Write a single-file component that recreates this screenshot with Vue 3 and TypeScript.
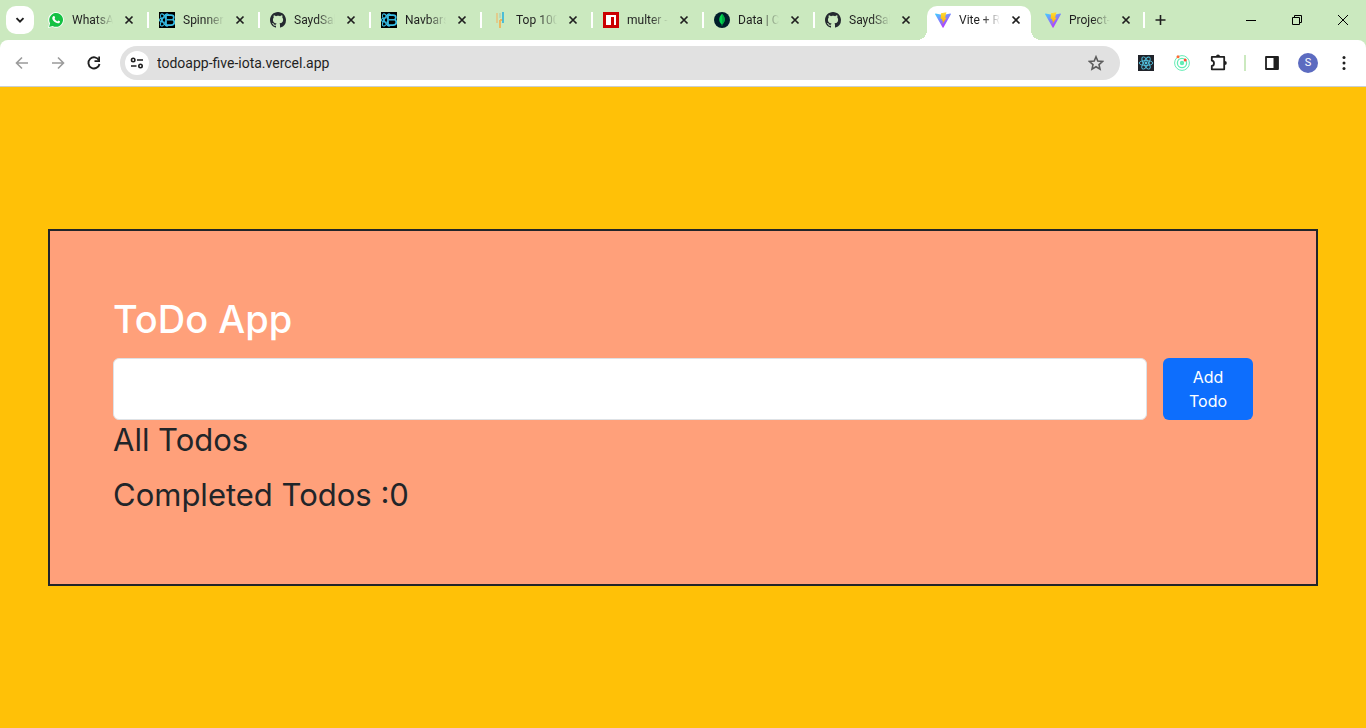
<script setup lang="ts">
import { ref } from 'vue'

type IconName = 'whatsapp' | 'bootstrap' | 'github' | 'bars' | 'npm' | 'mongo' | 'vite'

interface Tab {
  title: string
  icon: IconName
  active?: boolean
}

const tabs: Tab[] = [
  { title: 'WhatsA', icon: 'whatsapp' },
  { title: 'Spinner', icon: 'bootstrap' },
  { title: 'SaydSal', icon: 'github' },
  { title: 'Navbars', icon: 'bootstrap' },
  { title: 'Top 100', icon: 'bars' },
  { title: 'multer -', icon: 'npm' },
  { title: 'Data | C', icon: 'mongo' },
  { title: 'SaydSal', icon: 'github' },
  { title: 'Vite + R', icon: 'vite', active: true },
  { title: 'Project-', icon: 'vite' },
]

const url = ref('todoapp-five-iota.vercel.app')
const draft = ref('')
const completed = ref(0)
</script>

<template>
  <div class="window">
    <header class="tab-strip">
      <button class="tab-search" type="button" aria-label="Search tabs">
        <svg width="10" height="10" viewBox="0 0 10 10"><path d="M1.5 3.2 5 6.7 8.5 3.2" fill="none" stroke="#1f1f1f" stroke-width="1.9" /></svg>
      </button>

      <nav class="tabs" aria-label="Open tabs">
        <div v-for="(tab, i) in tabs" :key="i" class="tab" :class="{ active: tab.active, 'no-line': tabs[i + 1]?.active }">
          <svg v-if="tab.icon === 'whatsapp'" class="favicon" viewBox="0 0 16 16">
            <path d="M0 16 1.200 11.700A7.800 7.800 0 1 1 4.400 14.800Z" fill="#fff" />
            <path d="M1.100 14.900 2.100 11.300A6.900 6.900 0 1 1 4.700 13.900Z" fill="#14c143" />
            <path d="M5.500 4.100c.4-.3.8-.2 1 .2l.6 1.400c.1.300-.5.900-.6 1.100.7 1.300 1.500 2 2.800 2.600.300-.1.800-1 1.100-.9l1.500.8c.3.200.1 1-.3 1.400-1 1-2.500.7-4-.1-1.800-1-3-2.700-3.300-3.900-.2-1.100.5-2.100 1.200-2.600Z" fill="#fff" />
          </svg>
          <svg v-else-if="tab.icon === 'bootstrap'" class="favicon" viewBox="0 0 16 16">
            <path d="M0 0h16v16H0Z" fill="#000" />
            <g fill="none" stroke="#38bfe8" stroke-width="1.100">
              <ellipse cx="5.500" cy="8" rx="5" ry="2.200" />
              <ellipse cx="5.500" cy="8" rx="6.800" ry="2.300" transform="rotate(60 5.500 8)" />
              <ellipse cx="5.500" cy="8" rx="6.800" ry="2.300" transform="rotate(-60 5.500 8)" />
            </g>
            <path d="M7 3.200h5c2 0 2.800 1 2.800 2.300 0 1.200-.6 1.900-1.500 2.200 1.200.2 2 1.100 2 2.500 0 1.800-1.200 2.900-3.200 2.900H7Z" fill="#000" stroke="#38bfe8" stroke-width="1.700" />
            <path d="M8 7.800h5" stroke="#38bfe8" stroke-width="1.400" />
          </svg>
          <svg v-else-if="tab.icon === 'github'" class="favicon" viewBox="0 0 16 16">
            <path fill="#24292f" d="M8 0C3.580 0 0 3.580 0 8c0 3.540 2.290 6.530 5.470 7.590.4.070.55-.17.55-.38 0-.19-.01-.82-.01-1.490-2.010.37-2.530-.49-2.690-.94-.09-.23-.48-.94-.82-1.130-.28-.15-.68-.52-.01-.53.63-.01 1.080.58 1.230.82.72 1.210 1.870.87 2.330.66.07-.52.28-.87.51-1.070-1.780-.2-3.640-.89-3.640-3.950 0-.87.31-1.590.82-2.150-.08-.2-.36-1.020.08-2.120 0 0 .67-.21 2.200.82.64-.18 1.320-.27 2-.27s1.360.09 2 .27c1.530-1.040 2.200-.82 2.200-.82.44 1.100.16 1.920.08 2.120.51.56.82 1.270.82 2.150 0 3.070-1.870 3.750-3.650 3.950.29.25.54.73.54 1.480 0 1.070-.01 1.930-.01 2.200 0 .21.15.46.55.38A8.010 8.010 0 0 0 16 8c0-4.420-3.580-8-8-8Z" />
          </svg>
          <svg v-else-if="tab.icon === 'bars'" class="favicon" viewBox="0 0 16 16">
            <path d="M5 1v10" stroke="#e8c27c" stroke-width="1.500" />
            <path d="M8 8v8M8 8h3" stroke="#f0b458" stroke-width="1.800" />
            <path d="M11 0v11" stroke="#3fb9d8" stroke-width="1.800" />
            <path d="M8 1v5" stroke="#a8c7b0" />
          </svg>
          <svg v-else-if="tab.icon === 'npm'" class="favicon" viewBox="0 0 16 16">
            <path d="M0 0h16v16H0Z" fill="#cb0000" />
            <path d="M3 3h10v10h-2V5H8v8H3Z" fill="#fff" />
          </svg>
          <svg v-else-if="tab.icon === 'mongo'" class="favicon" viewBox="0 0 16 16">
            <circle cx="8" cy="8" r="8" fill="#001e2b" />
            <path d="M8 1.800c3.600 3.700 3.600 7.600.3 10.700l-.1 1.600h-.4l-.1-1.600C4.400 9.400 4.400 5.500 8 1.800Z" fill="#00d64f" />
            <path d="M8 1.800c3.600 3.700 3.600 7.600.3 10.700Z" fill="#00a844" />
          </svg>
          <svg v-else class="favicon" viewBox="0 0 16 16">
            <defs>
              <linearGradient :id="'shell' + i" x1="0" y1="0" x2=".6" y2="1">
                <stop offset="0" stop-color="#41d1ff" />
                <stop offset="1" stop-color="#bd34fe" />
              </linearGradient>
              <linearGradient :id="'bolt' + i" x1="0" y1="0" x2="0" y2="1">
                <stop offset="0" stop-color="#ffdd35" />
                <stop offset="1" stop-color="#ffa800" />
              </linearGradient>
            </defs>
            <path d="M15.900 2.300 8.500 15.500a.5.500 0 0 1-.9 0L.1 2.300a.5.500 0 0 1 .5-.7L8 2.900l7.400-1.300a.5.500 0 0 1 .5.700Z" :fill="`url(#shell${i})`" />
            <path d="M11.400.200 6 1.200 5.600 7l1.600-.3-.4 2.300 1.300-.4-.7 3.300L11.800 5.600l-1.700.3Z" :fill="`url(#bolt${i})`" />
          </svg>
          <span class="title">{{ tab.title }}</span>
          <button class="close" type="button" :aria-label="'Close ' + tab.title">
            <svg width="10" height="10" viewBox="0 0 10 10"><path d="m1.500 1.500 7 7M8.500 1.500l-7 7" stroke="#1f1f1f" stroke-width="1.700" /></svg>
          </button>
        </div>
      </nav>

      <button class="new-tab" type="button" aria-label="New tab">
        <svg width="12" height="12" viewBox="0 0 12 12"><path d="M5.500 1v10M.5 6h10" stroke="#1f1f1f" stroke-width="1.600" /></svg>
      </button>

      <div class="window-controls">
        <button type="button" aria-label="Minimize">
          <svg width="10" height="10" viewBox="0 0 10 10"><path d="M0 5.500h10" stroke="#000" /></svg>
        </button>
        <button type="button" aria-label="Restore">
          <svg width="10" height="10" viewBox="0 0 10 10" fill="none" stroke="#000"><path d="M.5 2.500h7v7h-7ZM2.500 2.500v-2h7v7h-2" /></svg>
        </button>
        <button type="button" aria-label="Close window">
          <svg width="10" height="10" viewBox="0 0 10 10"><path d="m0 0 10 10M10 0 0 10" stroke="#000" /></svg>
        </button>
      </div>
    </header>

    <div class="toolbar">
      <button class="tool" type="button" aria-label="Back">
        <svg width="16" height="16" viewBox="0 0 16 16" fill="none" stroke="#9b9b9b" stroke-width="1.600"><path d="M14 8H3M8 2.500 2.500 8 8 13.500" /></svg>
      </button>
      <button class="tool" type="button" aria-label="Forward">
        <svg width="16" height="16" viewBox="0 0 16 16" fill="none" stroke="#9b9b9b" stroke-width="1.600"><path d="M2 8h11M8 2.500 13.500 8 8 13.500" /></svg>
      </button>
      <button class="tool" type="button" aria-label="Reload">
        <svg width="16" height="16" viewBox="0 0 16 16"><path d="M13 5.300A5.600 5.600 0 1 0 13.500 9" fill="none" stroke="#1f1f1f" stroke-width="1.900" /><path d="M14 1.500V7H8.500V5.300h3.800V1.500Z" fill="#1f1f1f" /></svg>
      </button>

      <div class="address">
        <button class="site-info" type="button" aria-label="View site information">
          <svg width="14" height="12" viewBox="0 0 14 12" fill="none" stroke="#1f1f1f" stroke-width="1.600"><circle cx="3.200" cy="3" r="1.700" /><path d="M7 3h6M1 9h5.500" /><circle cx="10.500" cy="9" r="1.700" /></svg>
        </button>
        <input v-model="url" class="url" type="text" aria-label="Address" spellcheck="false" />
        <button class="tool" type="button" aria-label="Bookmark this tab">
          <svg width="16" height="16" viewBox="0 0 16 16"><path d="m8 1.800 1.800 4.300 4.700.4-3.500 3.100 1 4.600L8 11.800l-4 2.400 1-4.600-3.500-3.100 4.700-.4Z" fill="none" stroke="#5c5c5c" stroke-width="1.600" /></svg>
        </button>
      </div>

      <div class="extensions">
        <button class="tool" type="button" aria-label="React Developer Tools">
          <svg width="16" height="16" viewBox="0 0 16 16">
            <path d="M0 0h16v16H0Z" fill="#20232a" />
            <g fill="none" stroke="#53c1de" stroke-width=".9">
              <ellipse cx="8" cy="8" rx="6.800" ry="2.500" />
              <ellipse cx="8" cy="8" rx="6.800" ry="2.500" transform="rotate(60 8 8)" />
              <ellipse cx="8" cy="8" rx="6.800" ry="2.500" transform="rotate(120 8 8)" />
            </g>
            <circle cx="8" cy="8" r="1.400" fill="#53c1de" />
          </svg>
        </button>
        <button class="tool" type="button" aria-label="Orbit">
          <svg width="16" height="16" viewBox="0 0 16 16">
            <g fill="none" stroke="#63ecb4"><circle cx="8" cy="8" r="7.400" /><circle cx="8" cy="8" r="4.600" stroke-width="1.300" /></g>
            <circle cx="8" cy="8" r="2.200" fill="#63ecb4" />
            <circle cx="4" cy="1.700" r="1.500" fill="#ff6b35" /><circle cx="11.200" cy="5" r="1.500" fill="#ff4b2b" />
          </svg>
        </button>
        <button class="tool" type="button" aria-label="Extensions">
          <svg width="18" height="18" viewBox="0 0 18 18"><path d="M2.800 2.900h12.400v12.400H2.800v-3.500c2.900 0 2.900-5.200 0-5.200Z" fill="none" stroke="#1f1f1f" stroke-width="1.800" stroke-linejoin="round" /><path d="M7 2.500a2 2 0 0 1 4 0ZM15.800 7a2 2 0 0 1 0 4Z" fill="#1f1f1f" /></svg>
        </button>
        <span class="divider"></span>
        <button class="tool" type="button" aria-label="Side panel">
          <svg width="14" height="14" viewBox="0 0 14 14"><path d="M1 1h12v12H1Z" fill="none" stroke="#1f1f1f" stroke-width="1.800" stroke-linejoin="round" /><path d="M8.500 1H13v12H8.500Z" fill="#1f1f1f" /></svg>
        </button>
        <button class="tool" type="button" aria-label="Profile"><span class="avatar">S</span></button>
        <button class="tool" type="button" aria-label="Menu">
          <svg width="4" height="14" viewBox="0 0 4 14" fill="#1f1f1f"><circle cx="2" cy="1.600" r="1.500" /><circle cx="2" cy="7" r="1.500" /><circle cx="2" cy="12.400" r="1.500" /></svg>
        </button>
      </div>
    </div>

    <main class="page">
      <section class="card">
        <h1>ToDo App</h1>
        <form class="entry" @submit.prevent>
          <input v-model="draft" class="entry-input" type="text" aria-label="New todo" />
          <button class="add" type="submit">Add Todo</button>
        </form>
        <h2>All Todos</h2>
        <h2>Completed Todos :{{ completed }}</h2>
      </section>
    </main>
  </div>
</template>

<style>
body {
  margin: 0;
}
</style>

<style scoped>
.window {
  display: flex;
  flex-direction: column;
  min-height: 100vh;
  background: #cbe9bf;
  font-family: "Open Sans", "Noto Sans", sans-serif;
  color: #1f1f1f;
}

.window * {
  box-sizing: border-box;
}

button {
  display: flex;
  align-items: center;
  justify-content: center;
  padding: 0;
  border: 0;
  background: none;
  color: inherit;
  font: inherit;
}

.tab-strip {
  display: flex;
  height: 40px;
  padding-left: 6px;
}

.tab-search {
  width: 28px;
  height: 28px;
  margin: 6px 4px 0 0;
  border-radius: 10px;
  background: #fff;
}

.tabs {
  display: flex;
}

.tab {
  position: relative;
  display: flex;
  align-items: center;
  width: 111px;
  padding-left: 10px;
}

.tab::after {
  content: "";
  width: 2px;
  height: 16px;
  margin-left: auto;
  background: #fff;
}

.tab.no-line::after {
  background: none;
}

.tab.active {
  width: 104px;
  height: 34px;
  margin: 6px 4px 0 1px;
  padding: 0 0 6px 8px;
  border-radius: 10px 10px 0 0;
  background: #fff;
}

.tab.active::before,
.tab.active::after {
  content: "";
  position: absolute;
  bottom: 0;
  width: 10px;
  height: 10px;
}

.tab.active::before {
  right: 100%;
  background: radial-gradient(circle at 0 0, transparent 10px, #fff 10px);
}

.tab.active::after {
  left: 100%;
  margin: 0;
  background: radial-gradient(circle at 100% 0, transparent 10px, #fff 10px);
}

.tab:last-child {
  width: 110px;
}

.favicon {
  flex: none;
  width: 16px;
  height: 16px;
}

.title {
  width: 42px;
  margin-left: 8px;
  font: 12px/16px Roboto, sans-serif;
  white-space: nowrap;
  mask-image: linear-gradient(to right, #000 55%, transparent 98%);
}

.close {
  width: 16px;
  height: 16px;
  margin-left: 7px;
}

.new-tab {
  width: 28px;
  margin-left: 2px;
}

.window-controls {
  display: flex;
  margin-left: auto;
}

.window-controls button {
  width: 46px;
}

.toolbar {
  display: flex;
  align-items: center;
  height: 47px;
  padding: 0 8px;
  border-bottom: 1px solid #c9cfd0;
  border-radius: 8px 8px 0 0;
  background: #fff;
}

.toolbar > .tool {
  margin-right: 8px;
}

.tool {
  flex: none;
  width: 28px;
  height: 28px;
}

.address {
  display: flex;
  flex: 1;
  align-items: center;
  min-width: 0;
  height: 34px;
  margin: 0 12px 0 4px;
  padding: 0 10px 0 5px;
  border-radius: 17px;
  background: #e1e1e1;
}

.site-info {
  flex: none;
  width: 24px;
  height: 24px;
  border-radius: 50%;
  background: #fff;
}

.url {
  flex: 1;
  min-width: 0;
  padding: 0 0 0 8px;
  border: 0;
  outline: 0;
  background: none;
  color: #1f1f1f;
  font: 14px/20px Roboto, sans-serif;
}

.extensions {
  display: flex;
  align-items: center;
  gap: 8px;
}

.divider {
  width: 2px;
  height: 16px;
  margin: 0 4px;
  background: #cbe9bf;
}

.avatar {
  width: 20px;
  height: 20px;
  border-radius: 50%;
  background: #5c6bc0;
  color: #fff;
  font: 11px/20px Roboto, sans-serif;
  text-align: center;
}

.page {
  display: flex;
  flex: 1;
  align-items: center;
  padding: 0 48px;
  background: #ffc107;
  color: #212529;
  font-family: Inter, sans-serif;
}

.card {
  flex: 1;
  min-width: 0;
  padding: 64px 63px 62px;
  border: 2px solid #212529;
  background: #ffa07a;
}

h1,
h2 {
  margin: 0;
  font-weight: 400;
}

h1 {
  margin-bottom: 15px;
  color: #fff;
  font-size: 38px;
  font-weight: 500;
  line-height: 48px;
}

h2 {
  margin-bottom: 8px;
  font-size: 31px;
  line-height: 39px;
}

h2 + h2 {
  margin-top: 16px;
}

.entry {
  display: flex;
  gap: 16px;
}

.entry-input {
  flex: 1;
  min-width: 0;
  padding: 6px 12px;
  border: 1px solid #dee2e6;
  border-radius: 6px;
  outline: 0;
  background: #fff;
  font: inherit;
}

.add {
  width: 90px;
  padding: 7px 13px;
  border-radius: 6px;
  background: #0d6efd;
  color: #fff;
  font-size: 16px;
  line-height: 24px;
}
</style>
